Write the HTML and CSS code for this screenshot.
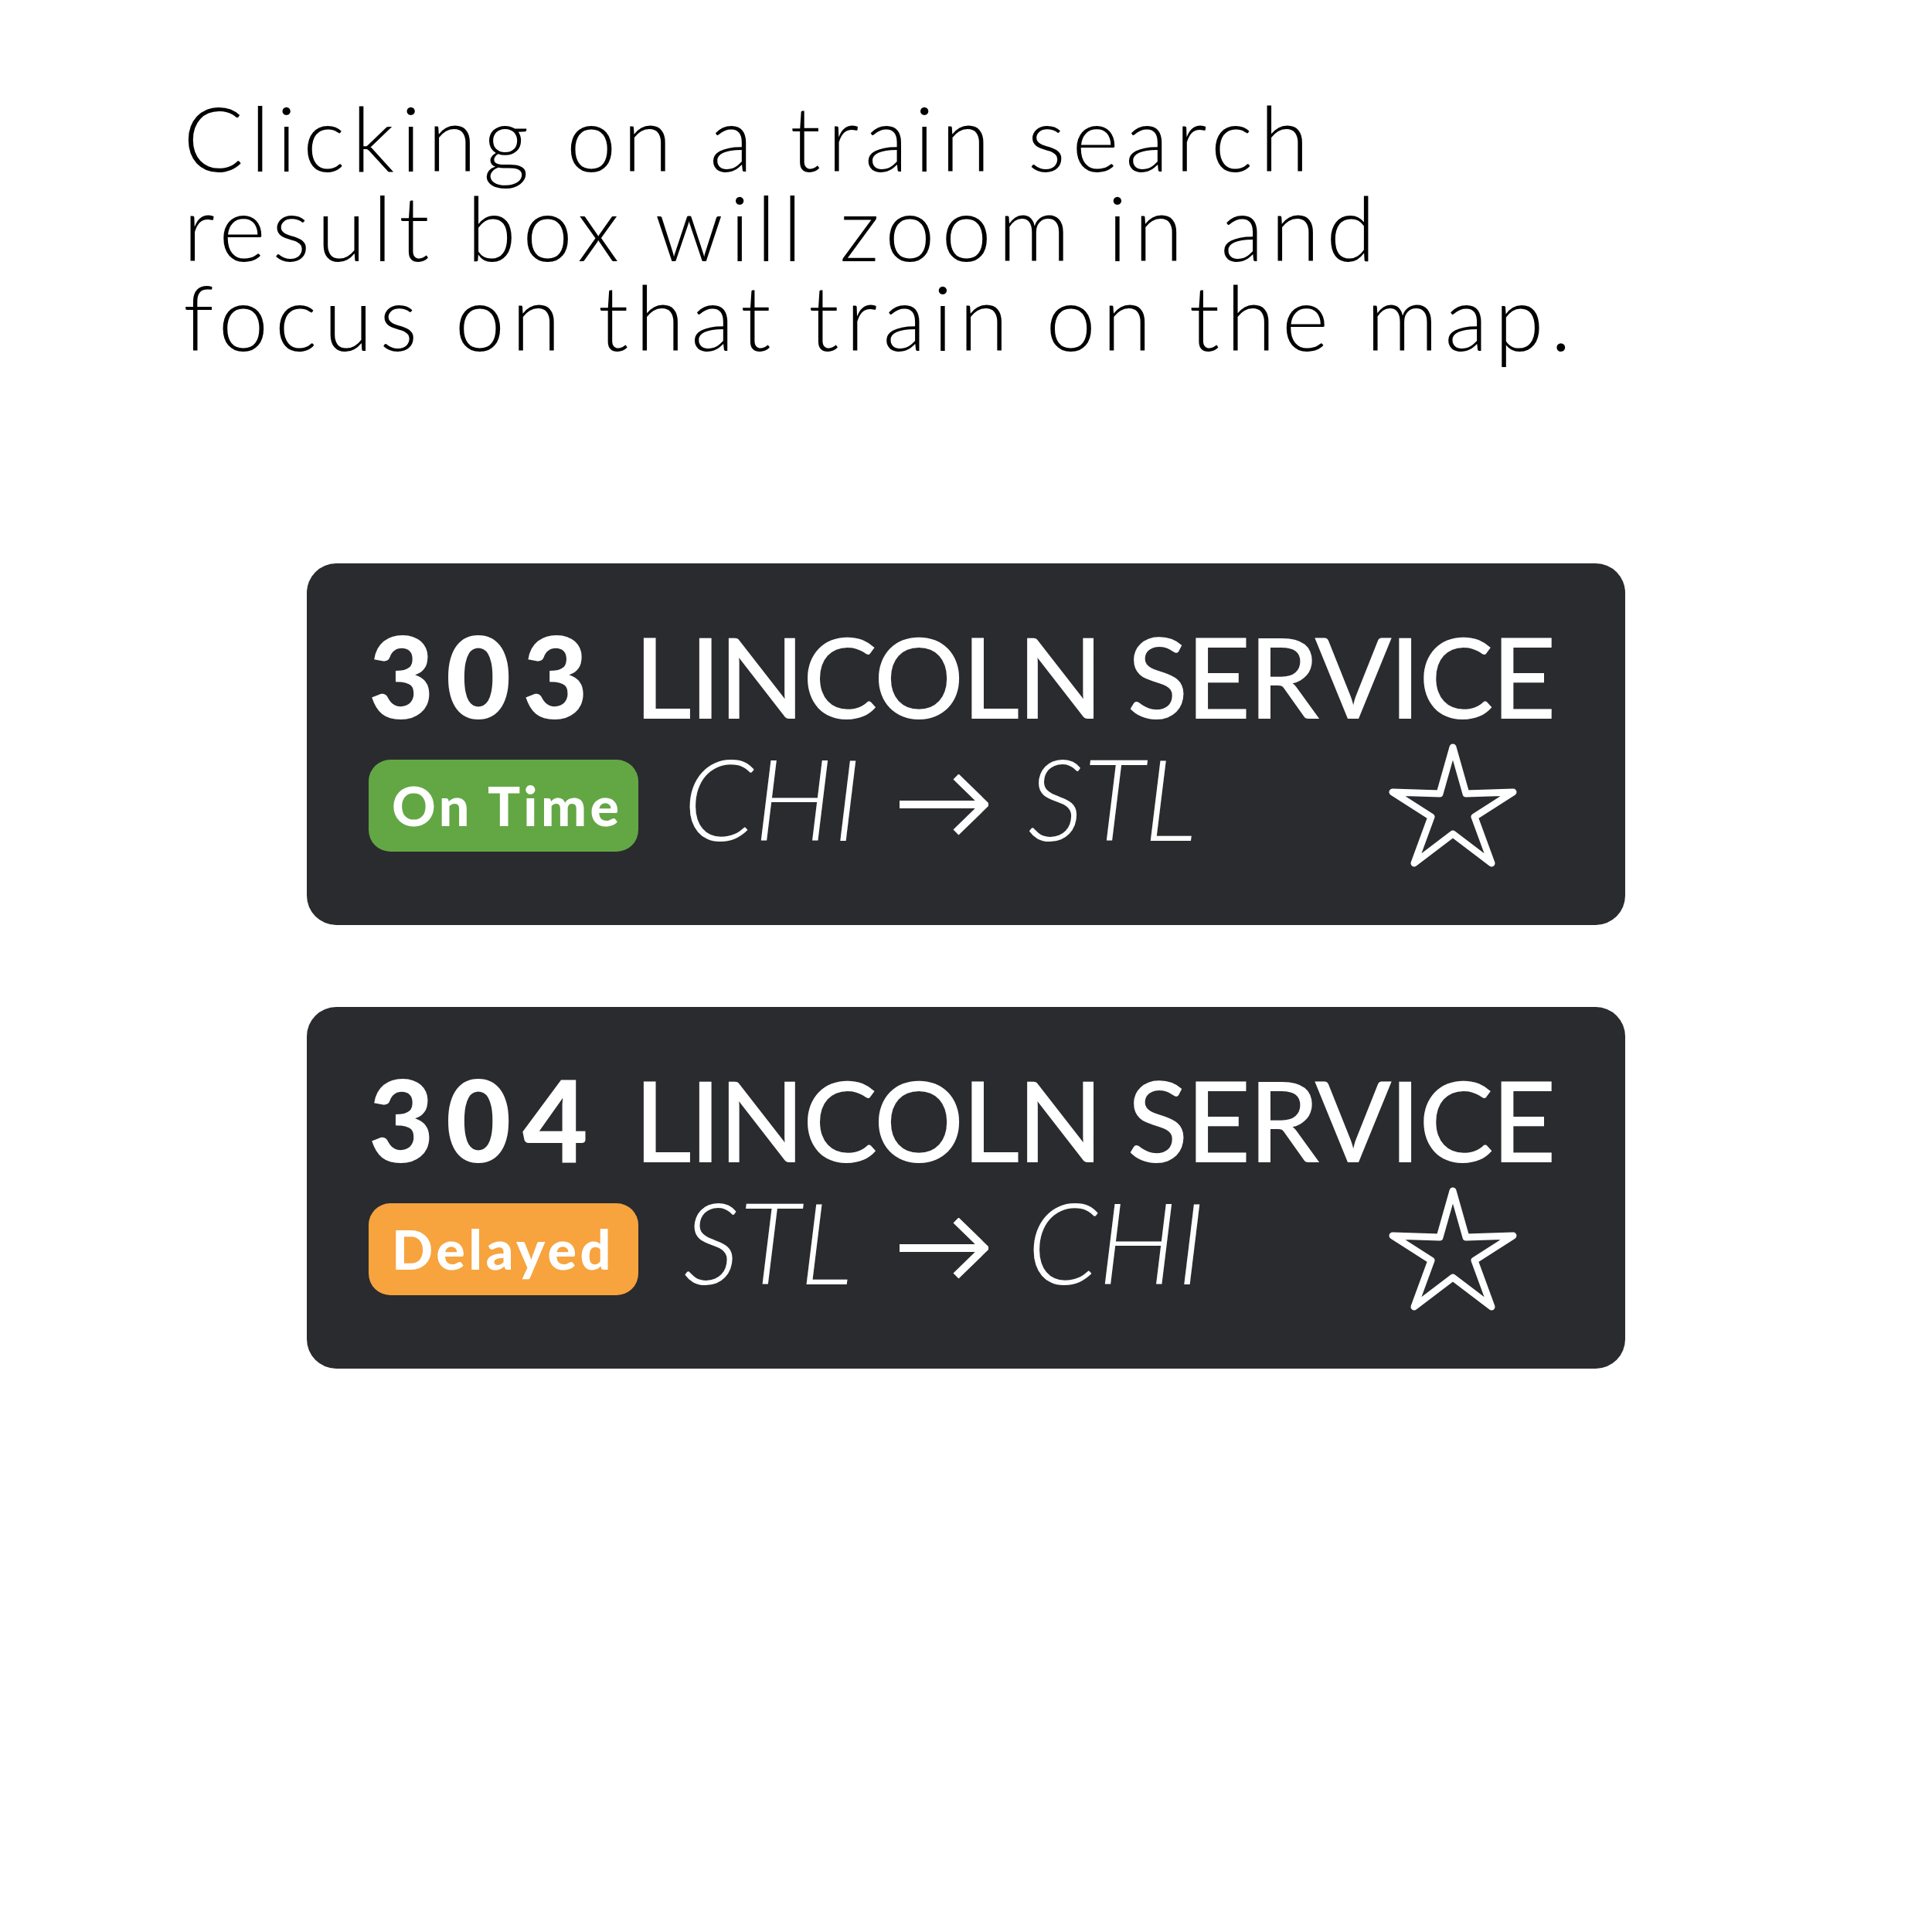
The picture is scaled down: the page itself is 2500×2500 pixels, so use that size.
FILE: index.html
```html
<!DOCTYPE html>
<html lang="en">
<head>
<meta charset="utf-8">
<title>Train search results</title>
<link rel="stylesheet" href="styles.css">
</head>
<body>
<main class="page">
  <p class="intro">Clicking on a train search<br>result box will zoom in and<br>focus on that train on the map.</p>

  <section class="results">
    <article class="card">
      <h2 class="title"><span class="num">303</span><span class="name">LINCOLN SERVICE</span></h2>
      <div class="meta">
        <span class="badge badge-ok">On Time</span>
        <div class="route">
          <span class="city city-from">CHI</span>
          <svg class="arrow" viewBox="0 0 115 80" aria-hidden="true"><path d="M0 39 H110 M73 3 L110 39 L73 75" fill="none" stroke="#fff" stroke-width="10"/></svg>
          <span class="city">STL</span>
        </div>
        <svg class="star" viewBox="0 0 200 190" aria-label="Favorite"><polygon points="100,20 117,80 178,78 128,110 150,170 100,132 50,170 72,110 22,78 83,80" fill="none" stroke="#fff" stroke-width="9" stroke-linejoin="round"/></svg>
      </div>
    </article>

    <article class="card">
      <h2 class="title"><span class="num">304</span><span class="name">LINCOLN SERVICE</span></h2>
      <div class="meta">
        <span class="badge badge-late">Delayed</span>
        <div class="route">
          <span class="city city-from">STL</span>
          <svg class="arrow" viewBox="0 0 115 80" aria-hidden="true"><path d="M0 39 H110 M73 3 L110 39 L73 75" fill="none" stroke="#fff" stroke-width="10"/></svg>
          <span class="city">CHI</span>
        </div>
        <svg class="star" viewBox="0 0 200 190" aria-label="Favorite"><polygon points="100,20 117,80 178,78 128,110 150,170 100,132 50,170 72,110 22,78 83,80" fill="none" stroke="#fff" stroke-width="9" stroke-linejoin="round"/></svg>
      </div>
    </article>
  </section>
</main>
</body>
</html>
```

FILE: styles.css
```css
html, body {
  margin: 0;
  padding: 0;
  background: #ffffff;
}

.page {
  width: 2500px;
  min-height: 2500px;
  padding: 120px 0 0 237px;
  box-sizing: border-box;
}

.intro {
  margin: 0;
  font-family: "Lato", "DejaVu Sans", sans-serif;
  font-weight: 300;
  font-size: 116px;
  line-height: 116px;
  letter-spacing: 8.4px;
  color: #000;
}

.results {
  display: flex;
  flex-direction: column;
  gap: 106px;
  margin-top: 261px;
  margin-left: 160px;
  width: 1706px;
}

.card {
  box-sizing: border-box;
  height: 468px;
  background: #2a2b2f;
  border-radius: 38px;
  padding: 72px 0 0 80px;
  color: #fff;
  font-family: "Lato", "DejaVu Sans", sans-serif;
}

.title {
  margin: 0;
  display: flex;
  align-items: baseline;
  gap: 44px;
  font-size: 146px;
  line-height: 146px;
  font-weight: 500;
}

.num {
  font-weight: 900;
  letter-spacing: 15px;
}

.name {
  font-weight: 500;
  letter-spacing: -3.3px;
}

.meta {
  display: flex;
  align-items: center;
  margin-top: 0;
}

.badge {
  box-sizing: border-box;
  width: 349px;
  height: 119px;
  border-radius: 28px;
  padding-left: 30px;
  display: flex;
  align-items: center;
  font-size: 70px;
  line-height: 70px;
  font-weight: 900;
  letter-spacing: 4.5px;
  color: #fff;
}

.badge-ok {
  background: #62a744;
}

.badge-late {
  background: #f7a33e;
}

.route {
  display: flex;
  align-items: center;
  margin-left: 58px;
  gap: 50px;
}

.city {
  font-size: 146px;
  line-height: 146px;
  font-style: italic;
  font-weight: 300;
  margin-bottom: 20px;
}

.city-from {
  min-width: 230px;
}

.arrow {
  width: 115px;
  height: 80px;
  display: block;
}

.star {
  width: 200px;
  height: 190px;
  display: block;
  margin-left: auto;
  margin-right: 123px;
}
```
